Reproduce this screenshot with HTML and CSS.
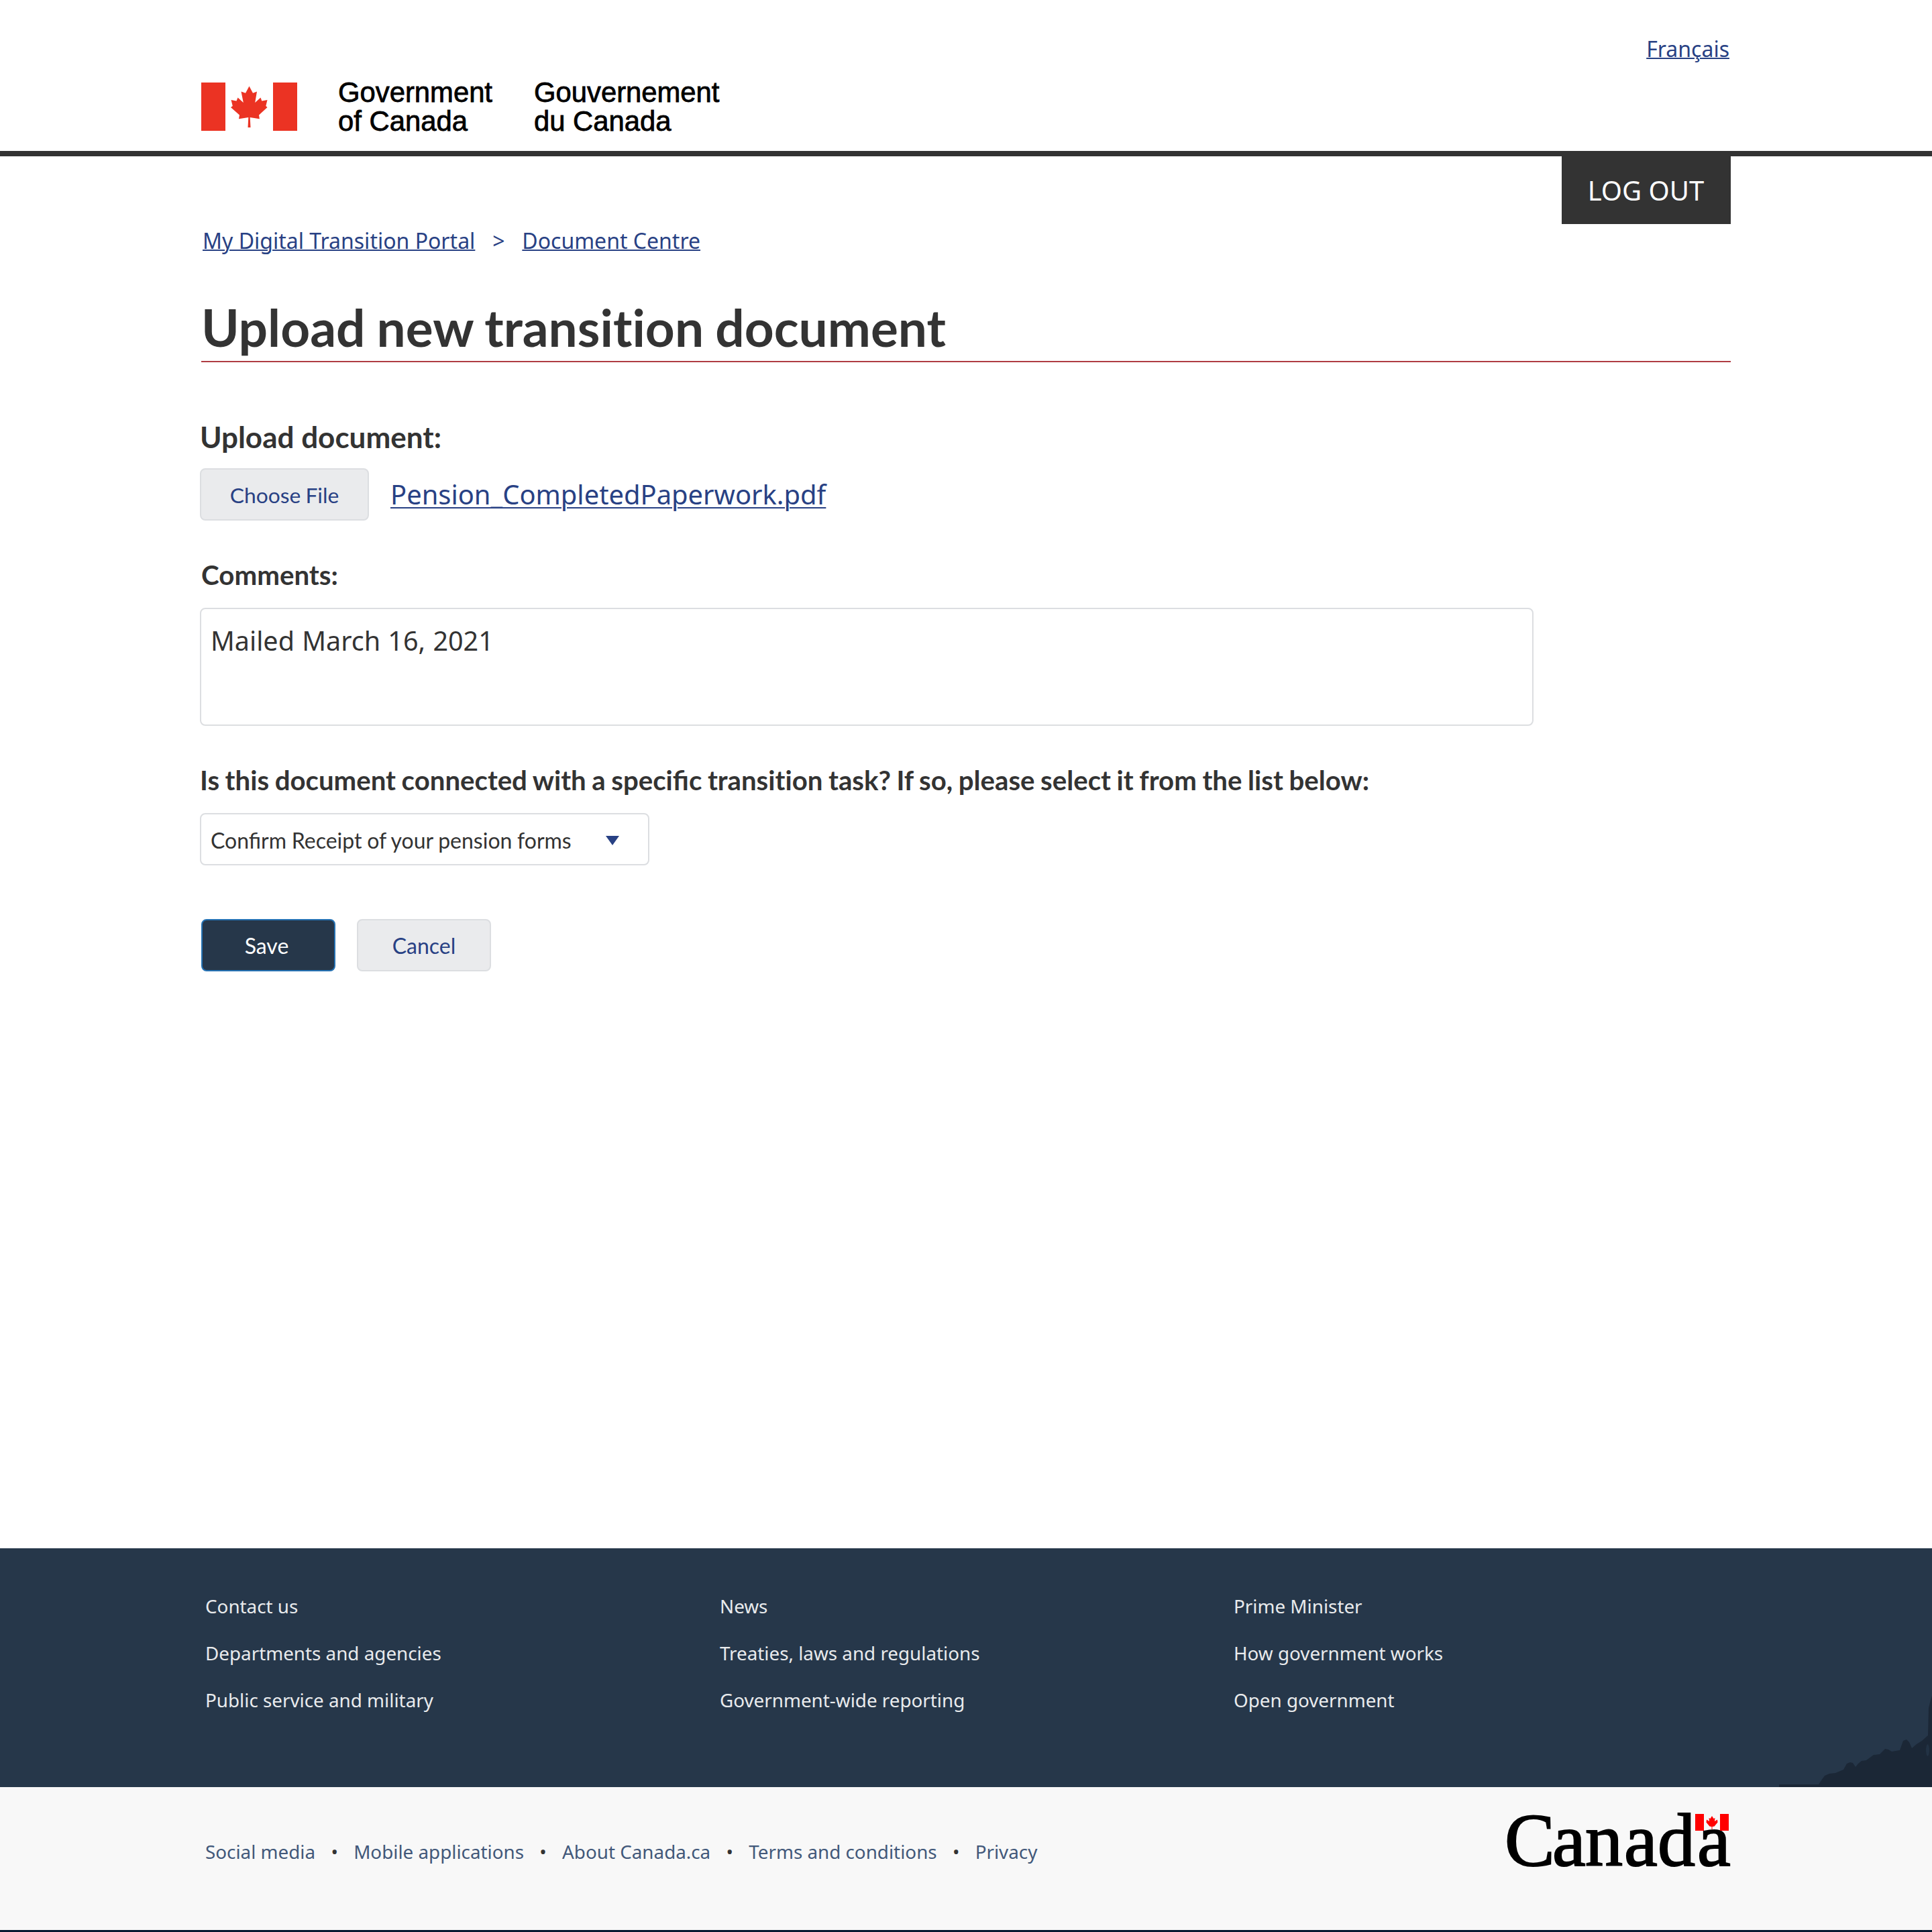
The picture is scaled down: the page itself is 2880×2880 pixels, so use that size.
FILE: index.html
```html
<!DOCTYPE html>
<html lang="en">
<head>
<meta charset="utf-8">
<title>Upload new transition document</title>
<link rel="stylesheet" href="styles.css">
</head>
<body>
<header class="site-header">
  <div class="container header-inner">
    <div class="brand">
      <svg class="flag" viewBox="0 0 143 72" aria-hidden="true">
        <path fill="#eb3323" d="M0 0h36v72H0zM107 0h36v72h-36z"/>
        <path fill="#eb3323" d="M71.5 5.500 66 15.800 59.500 13.500 62.800 30 54.500 22.500 52.500 27.500 44.500 26 46.800 35 44 37 57 48.500 56 54.200 70.300 52 69.500 67H73.500L72.700 52 86.900 54.200 86 48.500 98.500 37 96.300 35 98.500 26 90.300 27.500 88.500 22.500 80.200 30 83 13.500 77 15.800z"/>
      </svg>
      <div class="brand-name brand-en">Government<br>of Canada</div>
      <div class="brand-name">Gouvernement<br>du Canada</div>
    </div>
    <a class="lang" href="#">Français</a>
  </div>
</header>
<main class="container main">
  <div class="top-row">
    <nav class="breadcrumb"><a href="#">My Digital Transition Portal</a><span class="sep">&gt;</span><a href="#">Document Centre</a></nav>
    <a class="logout" href="#">LOG OUT</a>
  </div>
  <h1 class="title">Upload new transition document</h1>
  <form class="form">
    <div class="label label-upload">Upload document:</div>
    <div class="file-row">
      <button class="btn btn-file" type="button">Choose File</button>
      <a class="file-link" href="#">Pension_CompletedPaperwork.pdf</a>
    </div>
    <div class="label label-comments">Comments:</div>
    <div class="comments">Mailed March 16, 2021</div>
    <div class="label label-task">Is this document connected with a specific <span class="no-liga">transition</span> task? If so, please select it from the list below:</div>
    <div class="select"><span>Confirm Receipt of your pension forms</span><svg class="caret" viewBox="0 0 20 14" aria-hidden="true"><path d="M0 0h20L10 14z" fill="#284184"/></svg></div>
    <div class="actions">
      <button class="btn btn-primary" type="button">Save</button>
      <button class="btn" type="button">Cancel</button>
    </div>
  </form>
</main>
<footer class="footer">
  <div class="footer-main">
    <div class="container footer-cols">
      <ul><li>Contact us</li><li>Departments and agencies</li><li>Public service and military</li></ul>
      <ul><li>News</li><li>Treaties, laws and regulations</li><li>Government-wide reporting</li></ul>
      <ul><li>Prime Minister</li><li>How government works</li><li>Open government</li></ul>
    </div>
    <svg class="skyline" viewBox="0 0 230 148" aria-hidden="true">
      <path fill="#1b2736" d="M2 144H61L65 138 70 131 77 128 86 127 98 122 103 113 108 111 112 112 116 118 120 113 125 109 132 108 143 100 152 99 160 91 165 92 170 95 182 93 187 79 192 77 196 81 200 90 207 84 215 79 224 71 225 30 228 18 230 12V148H2z"/>
      <ellipse cx="223.500" cy="93" rx="2.500" ry="9" fill="#223244"/>
    </svg>
  </div>
  <div class="footer-sub">
    <div class="container footer-sub-inner">
      <ul class="links"><li>Social media</li><li>Mobile applications</li><li>About Canada.ca</li><li>Terms and conditions</li><li>Privacy</li></ul>
      <svg class="wordmark" viewBox="0 -30 350 150" role="img">
        <text class="wordmark-text" x="3 74 123 181 231 290" y="84">Canada</text>
        <path fill="red" d="M287 7h13v25h-13zM324 7h13v25h-13zM312 10l2.500 4 2-1-.5 5 4-2.500.5 4-5 6-3 .5V30h-1v-4l-3-.5-5-6 .5-4 4 2.500-.5-5 2 1z"/>
      </svg>
    </div>
  </div>
  <div class="footer-edge"></div>
</footer>
</body>
</html>
```
FILE: styles.css
```css
* { box-sizing: border-box; }
body {
  margin: 0;
  min-height: 2880px;
  display: flex;
  flex-direction: column;
  background: #fff;
  color: #333;
  font-family: "Noto Sans", sans-serif;
}
a { color: #284184; text-decoration-thickness: 2px; }
.container { width: 2280px; margin: 0 auto; }

.site-header { height: 233px; border-bottom: 8px solid #333; }
.header-inner { display: flex; justify-content: space-between; }
.brand { display: flex; padding-top: 116px; }
.flag { width: 143px; height: 72px; margin-top: 7px; }
.brand-name {
  font-family: "Liberation Sans", sans-serif;
  font-size: 41.8px;
  line-height: 43px;
  color: #000;
  -webkit-text-stroke: 0.8px #000;
}
.brand-en { width: 292px; margin-left: 61px; }
.lang { font-size: 32px; line-height: 44px; margin: 51px 2px 0 0; }

.main { flex: 1; }
.top-row { display: flex; justify-content: space-between; }
.breadcrumb { display: flex; font-size: 32px; line-height: 44px; padding: 104px 0 0 2px; }
.sep { color: #284184; width: 70px; text-align: center; }
.logout {
  width: 252px;
  height: 101px;
  padding: 24px 1px 0 0;
  background: #333;
  color: #fff;
  font-size: 40px;
  line-height: 54px;
  text-align: center;
  text-decoration: none;
}
.title {
  margin: 56px 0 0;
  height: 103px;
  border-bottom: 2px solid #af3c43;
  font: 700 76.6px/100px Lato, sans-serif;
  font-variant-ligatures: none;
  word-spacing: -1.5px;
}
.form { margin-left: -2px; }
.label { font: 700 40.3px/48px Lato, sans-serif; }
.no-liga { font-variant-ligatures: none; }
.label-upload { font-size: 44px; margin-top: 87px; }
.file-row { display: flex; margin-top: 23px; }
.btn {
  width: 200px;
  height: 78px;
  padding: 2px 0 0;
  border: 2px solid #dcdee1;
  border-radius: 8px;
  background: #eaebed;
  color: #284184;
  font: 400 32px/40px Lato, sans-serif;
}
.btn-file { width: 252px; font-size: 31.8px; word-spacing: -1px; }
.file-link { font-size: 39.9px; line-height: 54px; margin: 12px 0 0 32px; text-underline-offset: 4px; }
.label-comments { margin: 57px 0 0 2px; }
.comments {
  width: 1988px;
  height: 176px;
  margin-top: 25px;
  padding: 20px 14px;
  border: 2px solid #dcdee1;
  border-radius: 8px;
  font-size: 39.5px;
  line-height: 54px;
  word-spacing: 1px;
}
.label-task { margin-top: 57px; font-size: 40.2px; word-spacing: -1.2px; }
.select {
  display: flex;
  align-items: center;
  justify-content: space-between;
  width: 670px;
  height: 78px;
  margin-top: 25px;
  padding: 3px 43px 0 14px;
  border: 2px solid #dcdee1;
  border-radius: 8px;
  font: 400 32px/40px Lato, sans-serif;
  word-spacing: -0.5px;
}
.caret { width: 20px; height: 14px; }
.actions { display: flex; gap: 32px; margin: 80px 0 0 2px; }
.btn-primary { padding-right: 5px; border-color: #2572b4; background: #26374a; color: #fff; }

.footer-main { position: relative; height: 356px; background: #26374a; color: #e9ebed; }
.footer ul { list-style: none; margin: 0; padding: 0; font-size: 27.8px; }
.footer-cols { display: grid; grid-template-columns: 767px 766px 1fr; padding: 51px 0 0 6px; }
.footer-cols li { line-height: 70px; }
.skyline { position: absolute; right: 0; bottom: 0; width: 230px; height: 148px; }
.footer-sub { height: 213px; background: #f8f8f8; }
.footer-sub-inner { display: flex; justify-content: space-between; }
.footer .links { display: flex; padding: 61px 0 0 6px; line-height: 70px; color: #42587a; }
.links li + li::before { content: "•"; display: inline-block; width: 57px; text-align: center; color: #333; }
.wordmark { width: 350px; height: 150px; margin: 3px -10px 0 0; }
.wordmark-text { font: 112px "Liberation Serif", serif; stroke: #000; stroke-width: 2px; }
.footer-edge { height: 3px; background: #061a30; }
```
